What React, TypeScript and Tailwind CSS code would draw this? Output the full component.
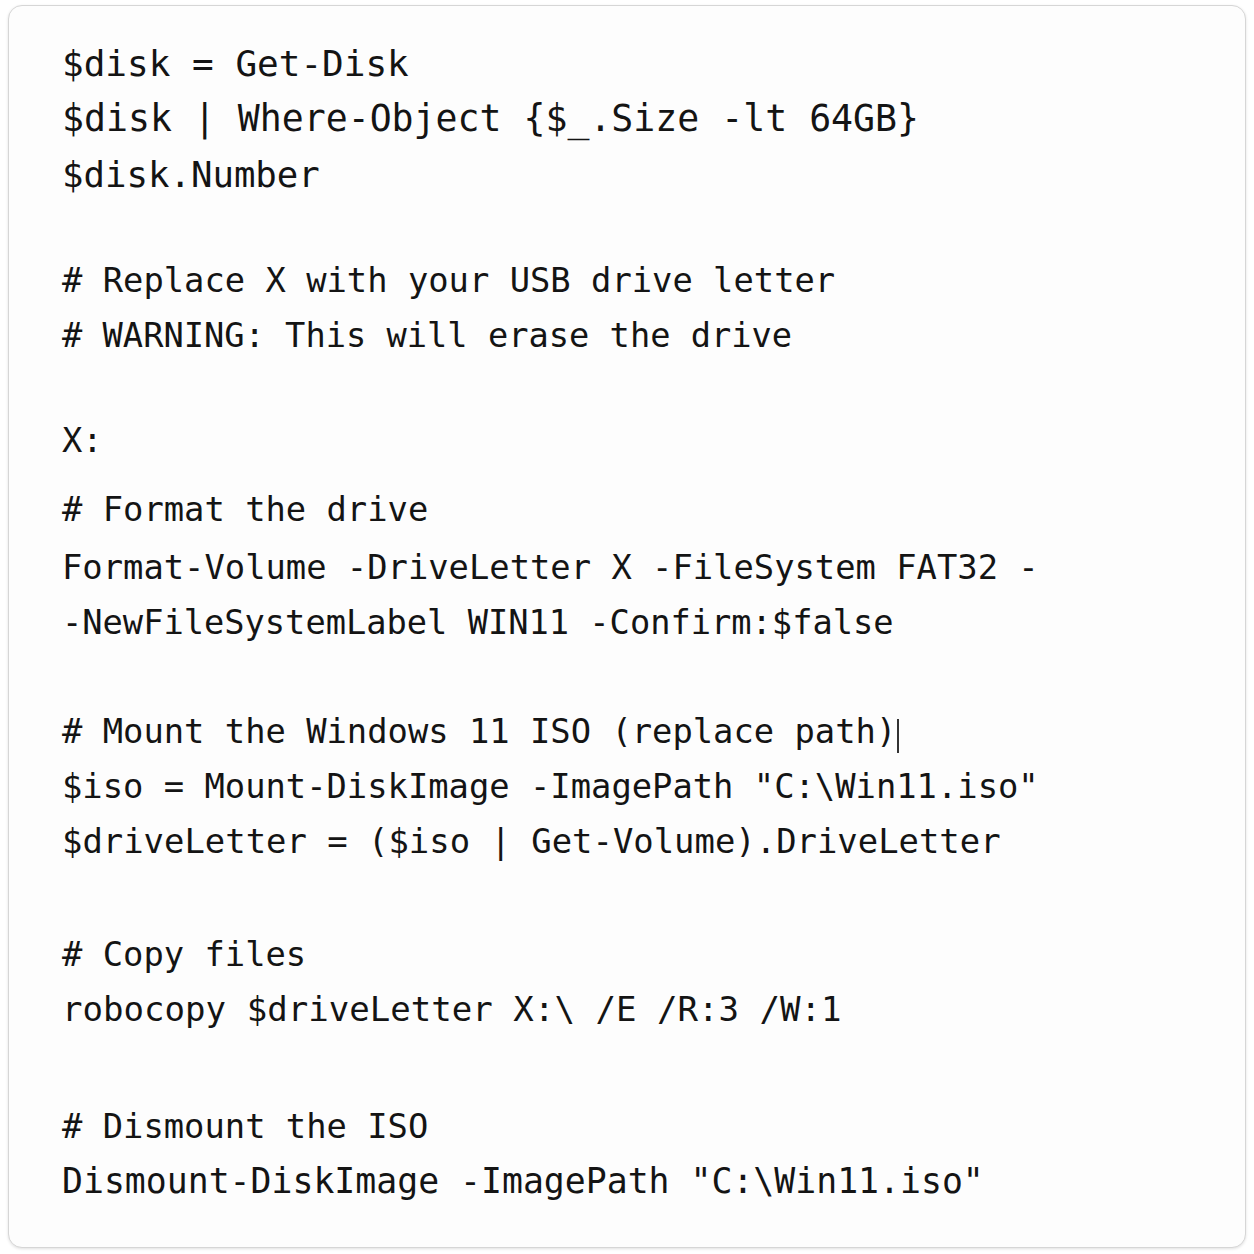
import React from 'react';

type Line = { text: string; mt: string; size: string; cursor?: boolean };

// spacing and sizes follow the screenshot line by line
const lines: Line[] = [
  { text: '$disk = Get-Disk', mt: 'mt-0', size: 'text-[36px]' },
  { text: '$disk | Where-Object {$_.Size -lt 64GB}', mt: 'mt-0', size: 'text-[36.5px]' },
  { text: '$disk.Number', mt: 'mt-[1px]', size: 'text-[35.7px]' },
  { text: '# Replace X with your USB drive letter', mt: 'mt-[51px]', size: 'text-[33.8px]' },
  { text: '# WARNING: This will erase the drive', mt: 'mt-0', size: 'text-[33.7px]' },
  { text: 'X:', mt: 'mt-[50px]', size: 'text-[33.8px]' },
  { text: '# Format the drive', mt: 'mt-[14px]', size: 'text-[33.8px]' },
  { text: 'Format-Volume -DriveLetter X -FileSystem FAT32 -', mt: 'mt-[3px]', size: 'text-[33.8px]' },
  { text: '-NewFileSystemLabel WIN11 -Confirm:$false', mt: 'mt-0', size: 'text-[33.7px]' },
  { text: '# Mount the Windows 11 ISO (replace path)', mt: 'mt-[54px]', size: 'text-[33.8px]', cursor: true },
  { text: '$iso = Mount-DiskImage -ImagePath "C:\\Win11.iso"', mt: 'mt-0', size: 'text-[33.8px]' },
  { text: '$driveLetter = ($iso | Get-Volume).DriveLetter', mt: 'mt-0', size: 'text-[33.9px]' },
  { text: '# Copy files', mt: 'mt-[58px]', size: 'text-[33.8px]' },
  { text: 'robocopy $driveLetter X:\\ /E /R:3 /W:1', mt: 'mt-0', size: 'text-[34.1px]' },
  { text: '# Dismount the ISO', mt: 'mt-[62px]', size: 'text-[33.8px]' },
  { text: 'Dismount-DiskImage -ImagePath "C:\\Win11.iso"', mt: 'mt-0', size: 'text-[34.8px]' },
];

export default function App() {
  return (
    <div className="w-[1254px] h-[1254px] bg-white pl-[8px] pr-[8px] pt-[5px] pb-[6px]">
      <div className="h-full rounded-[14px] border border-[#d6d6d6] bg-[#fdfdfd] shadow-[0_1px_3px_rgba(0,0,0,0.12)] pl-[53px] pt-[30px]">
        <div className="font-['DejaVu_Sans_Mono',monospace] text-[#141414] whitespace-pre">
          {lines.map((l, i) => (
            <div key={i} className={`h-[55px] leading-[55px] ${l.mt} ${l.size}`}>
              {l.text}
              {l.cursor && (
                <span className="inline-block w-[2px] h-[34px] bg-[#333] align-[-10px] ml-[1px]" />
              )}
            </div>
          ))}
        </div>
      </div>
    </div>
  );
}
